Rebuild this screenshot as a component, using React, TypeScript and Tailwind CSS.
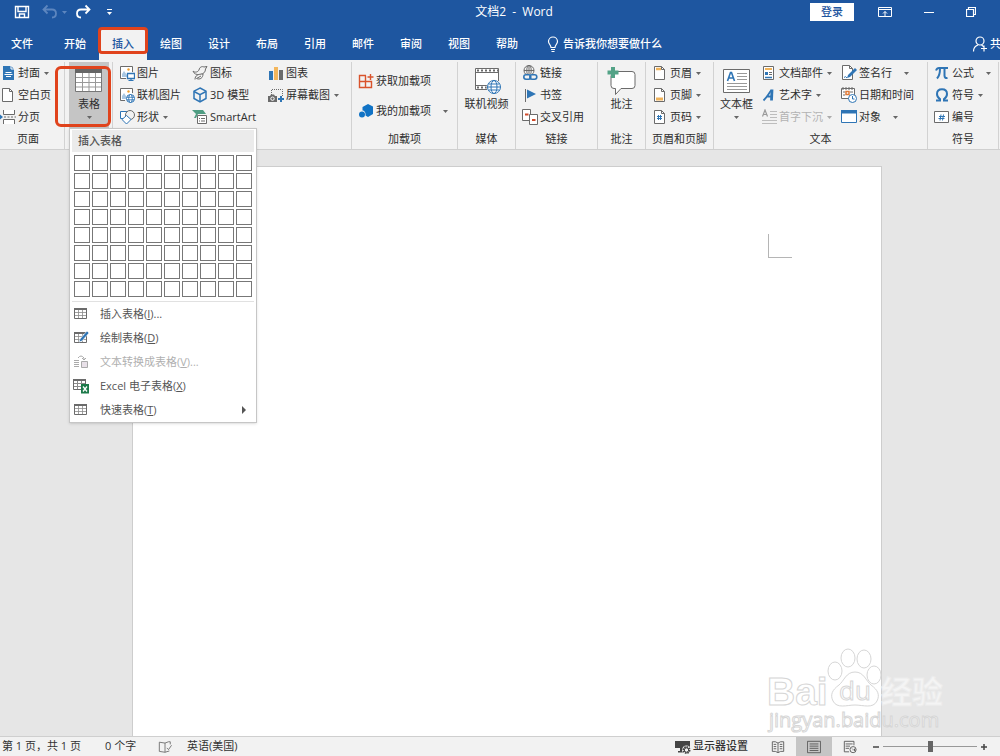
import type { ReactNode } from "react";

const BLUE = "#2f75b5";
const GRAY = "#6b6b6b";

interface IconProps {
  children: ReactNode;
  className?: string;
  box?: string;
}

function Icon({ children, className = "size-4", box = "0 0 16 16" }: IconProps) {
  return (
    <svg viewBox={box} className={`shrink-0 ${className}`} fill="none" aria-hidden="true">
      {children}
    </svg>
  );
}

function Caret({ className = "" }: { className?: string }) {
  return (
    <Icon box="0 0 5 3" className={`h-[3px] w-[5px] ${className}`}>
      <path d="M0 0h5L2.5 3z" fill="#666" />
    </Icon>
  );
}

/* ---------- Ribbon icons ---------- */

const CoverIcon = (
  <Icon>
    <path d="M3 1h8l3 3v11H3z" fill={BLUE} />
    <path d="M11 1v3h3" stroke="#fff" />
    <path d="M5.500 7.500h6M4.500 9.500h8M6 11.500h5" stroke="#fff" />
  </Icon>
);

const BlankPageIcon = (
  <Icon>
    <path d="M2.500 1.500h7l3 3v10h-10z" fill="#fff" stroke={GRAY} />
    <path d="M9.500 1.500v3h3" stroke={GRAY} />
  </Icon>
);

const BreakIcon = (
  <Icon>
    <path d="M3.500 1v4.500h11V1M3.500 15v-4.500h11V15" fill="#fff" stroke={GRAY} />
    <path d="M4 8h2M7.500 8h2M11 8h2M14.500 8H16" stroke={GRAY} />
    <path d="M0 5.500 3 8 0 10.500z" fill={BLUE} />
  </Icon>
);

const PictureIcon = (
  <Icon>
    <path d="M7 13.500H1.500v-12h12V7" fill="#fff" stroke={GRAY} />
    <path d="M3 12V9l2-3 3 4v2z" fill="#a9c7e2" />
    <circle cx="9.500" cy="4.500" r="1.200" fill="#f0a030" />
    <path d="M8.500 8.500h7v5h-7z" fill="#fff" stroke={BLUE} strokeWidth="1.300" />
    <path d="M12 13.500V15M9.500 15.500h5" stroke={BLUE} strokeWidth="1.200" />
  </Icon>
);

const OnlinePictureIcon = (
  <Icon>
    <path d="M6 13.500H1.500v-12h12V6" fill="#fff" stroke={GRAY} />
    <path d="M3 12V9l2-3 2 3v3z" fill="#a9c7e2" />
    <circle cx="9.500" cy="4.500" r="1.200" fill="#f0a030" />
    <circle cx="11.500" cy="11.500" r="4" fill="#fff" stroke={BLUE} />
    <ellipse cx="11.500" cy="11.500" rx="1.800" ry="4" stroke={BLUE} />
    <path d="M7.500 10.300h8M7.500 12.800h8" stroke={BLUE} strokeWidth=".8" />
  </Icon>
);

const ShapesIcon = (
  <Icon>
    <path d="M1.500 2.500h8v7h-8z" fill="#fff" stroke={BLUE} />
    <circle cx="11" cy="6" r="4.500" fill="#f2f2f2" stroke={GRAY} />
    <path d="m7.500 6.500 4.500 4-4.500 4.500L3 10.500z" fill="#fff" stroke={BLUE} />
  </Icon>
);

const IconsIcon = (
  <Icon>
    <path
      d="M1 6c2 2 5 1 6-1 .5-3 3-4 5-3l3-.5-1.500 2.500c0 3-2 5-5 5.500C4.500 10 2 9 1 6z"
      stroke={GRAY}
    />
    <path d="M3 14.500c0-4 3-5.500 8-5.500 0 4-3 6-6.500 4.500L9 11" fill="#f2f2f2" stroke={GRAY} />
  </Icon>
);

const CubeIcon = (
  <Icon>
    <path d="m8 1 6 3.200v7.300L8 15l-6-3.500V4.200z" stroke={BLUE} strokeWidth="1.500" />
    <path d="m2 4.500 6 3.200 6-3.200M8 7.700V15" stroke={BLUE} strokeWidth="1.500" />
  </Icon>
);

const SmartArtIcon = (
  <Icon>
    <path d="M0 1h11l3 4h-8l-2 4H2l2-4z" fill="#4f9d83" />
    <path d="M5.500 6.500h9v8h-9z" fill="#fff" stroke={GRAY} />
    <path d="M7 9.500h1M9 9.500h4M7 12h1M9 12h4" stroke={GRAY} />
  </Icon>
);

const ChartIcon = (
  <Icon>
    <path d="M1 6h4v9H1z" fill={BLUE} />
    <path d="M6 2h4v13H6z" fill="#f3b65c" />
    <path d="M11 5h4v10h-4z" fill={GRAY} />
  </Icon>
);

const ScreenshotIcon = (
  <Icon>
    <path d="M3.500 8V2.500h11V9" stroke={GRAY} strokeDasharray="1 1" />
    <path d="M0 9h2l1-1.500h3L7 9h2v6H0z" fill={GRAY} />
    <circle cx="4.500" cy="11.700" r="1.700" fill={GRAY} stroke="#fff" />
    <path d="M13 9v6M10 12h6" stroke={BLUE} strokeWidth="2" />
  </Icon>
);

const GetAddinIcon = (
  <Icon>
    <path d="M8 2.500H1.500v12h12V8.500h-12M7.500 2.500v12" stroke="#d9532c" strokeWidth="1.400" />
    <path d="M12.500 1v6M9.500 4h6" stroke="#d9532c" strokeWidth="1.400" />
  </Icon>
);

const MyAddinIcon = (
  <Icon>
    <path d="m10 1 5 2.500V11l-5 3-2.500-1.500C8 9 6 7.500 4.500 7.500V4z" fill="#1173c5" />
    <circle cx="4" cy="11.500" r="3" fill="#1173c5" />
  </Icon>
);

const VideoIcon = (
  <Icon box="0 0 28 28" className="size-7">
    <path d="M2.500 1.500h23v21h-23z" fill="#fff" />
    <path d="M25.500 14V1.500h-23v21H14M2.500 5.500h23M2.500 18.500H14" stroke={GRAY} />
    <path d="M4 3.500h21M4 20.500h10" stroke={GRAY} strokeWidth="2" strokeDasharray="2 2" />
    <circle cx="21" cy="20" r="7.500" fill="#f2f2f2" />
    <circle cx="21" cy="20" r="6.500" fill="#fff" stroke={BLUE} />
    <ellipse cx="21" cy="20" rx="3" ry="6.500" stroke={BLUE} />
    <path d="M14.500 20h13M15.500 17h11M15.500 23h11" stroke={BLUE} />
  </Icon>
);

const LinkIcon = (
  <Icon>
    <circle cx="7" cy="5.500" r="5" stroke={GRAY} />
    <ellipse cx="7" cy="5.500" rx="2.200" ry="5" stroke={GRAY} />
    <path d="M2 5.500h10M7 .5V9" stroke={GRAY} />
    <path d="M1 9h15v7H1z" fill="#f2f2f2" />
    <rect x="1.800" y="9.800" width="7" height="4.500" rx="2.200" stroke={BLUE} strokeWidth="1.600" />
    <rect x="7.800" y="9.800" width="7" height="4.500" rx="2.200" stroke={BLUE} strokeWidth="1.600" />
  </Icon>
);

const BookmarkIcon = (
  <Icon>
    <path d="M3.500 2v13" stroke={GRAY} />
    <path d="M5 2.500 14 7l-9 4.500z" fill={BLUE} />
  </Icon>
);

const CrossRefIcon = (
  <Icon>
    <path d="M.5.5h8v11h-8z" fill="#fff" stroke={GRAY} />
    <path d="M7.500 5.500h8v10h-8z" fill="#fff" stroke={GRAY} />
    <path d="M3 5.500h3.500M10 11h3.500" stroke="#d04a2b" strokeWidth="2" />
  </Icon>
);

const CommentIcon = (
  <Icon box="0 0 32 30" className="h-[30px] w-8">
    <path
      d="M7 5.500h19q3 0 3 3v11q0 3-3 3H15l-5.500 6v-6H8q-3 0-3-3v-10"
      fill="#fff"
      stroke={GRAY}
    />
    <path d="M7 1v11M1.500 6.500h11" stroke="#54a387" strokeWidth="4" />
  </Icon>
);

const PageFrame = (
  <>
    <path d="M2.500 1.500h7l3 3v10h-10z" fill="#fff" stroke={GRAY} />
    <path d="M9.500 1.500v3h3" stroke={GRAY} />
  </>
);

const HeaderIcon = (
  <Icon>
    {PageFrame}
    <path d="M4 4h5" stroke="#f0b35a" strokeWidth="2.500" />
  </Icon>
);

const FooterIcon = (
  <Icon>
    {PageFrame}
    <path d="M4 12h7" stroke="#f0b35a" strokeWidth="3" />
  </Icon>
);

const PageNumberIcon = (
  <Icon>
    {PageFrame}
    <path d="M6.500 6v5M8.500 6v5M5 7.500h5M5 9.500h5" stroke={BLUE} />
  </Icon>
);

const TextBoxIcon = (
  <Icon box="0 0 28 26" className="h-[26px] w-7">
    <path d="M.5 1.500h26v23H.5z" fill="#fff" stroke={GRAY} />
    <path d="m4.500 13 3-8.500h1l3 8.500M5.500 10h5" stroke={BLUE} strokeWidth="1.600" />
    <path d="M14 5.500h10M14 8.500h10M14 11.500h10M4 15.500h20M4 18.500h20M4 21.500h20" stroke="#999" />
  </Icon>
);

const QuickPartsIcon = (
  <Icon>
    <path d="M2.500 1.500h10v13h-10z" fill="#fff" stroke={GRAY} />
    <path d="M4 4h7" stroke="#f0b35a" strokeWidth="2" />
    <path d="M4 7h3v3H4z" fill={BLUE} />
    <path d="M8 7.500h3M8 9.500h3" stroke={GRAY} />
    <path d="M4 12.500h7" stroke={BLUE} strokeWidth="1.500" />
  </Icon>
);

const WordArtIcon = (
  <Icon>
    <path d="M2.500 13.500C6 10 8 6 10.500 3M5.500 9.500h5" stroke={BLUE} strokeWidth="1.800" />
    <path d="m11 2.500-.5 11" stroke={BLUE} strokeWidth="2.800" />
  </Icon>
);

const DropCapIcon = (
  <Icon>
    <path d="M1.500 7.500 4 1l2.500 6.500M2.500 5.500h3" stroke="#9a9a9a" strokeWidth="1.200" />
    <path d="M9 2.500h7M9 5.500h7M9 8.500h7M1 11.500h15M1 14.500h15" stroke="#bdbdbd" />
  </Icon>
);

const SignatureIcon = (
  <Icon>
    <path d="M1.500.5h7l3 3v11h-10z" fill="#fff" stroke={GRAY} />
    <path d="M8.500.5v3h3" stroke={GRAY} />
    <path d="m6 13 1-3 7-7 2 2-7 7z" fill={BLUE} />
    <path d="M3 12.500q1.500-2 3 .5" stroke={BLUE} />
  </Icon>
);

const DateIcon = (
  <Icon>
    <path d="M.5 1.500h13v10H.5z" fill="#fff" stroke={GRAY} />
    <path d="M1 1.500h12" stroke={GRAY} strokeWidth="2" strokeDasharray="2 1" />
    <path d="M2 5h2M2 8h2M9 5h3" stroke={GRAY} />
    <path d="M5 4.500h3v3H5z" stroke="#e07b39" strokeWidth="1.500" />
    <circle cx="11.500" cy="11.500" r="4" fill="#fff" stroke={BLUE} />
    <path d="M11.500 9v3h2" stroke={BLUE} />
  </Icon>
);

const ObjectIcon = (
  <Icon>
    <path d="M.5 1.500h15v12H.5z" fill="#fff" stroke={BLUE} />
    <path d="M0 1h16v3.500H0z" fill={BLUE} />
  </Icon>
);

const PiIcon = (
  <Icon>
    <path d="M2 5.500Q3 3 5 3h9" stroke={BLUE} strokeWidth="2" />
    <path d="M6 3.500q0 7-3 10M10.500 3.500v7q0 3 3 2.500" stroke={BLUE} strokeWidth="2" />
  </Icon>
);

const OmegaIcon = (
  <Icon>
    <path
      d="M2 13.500h4V12C3.500 10.500 3 8.500 3 7c0-3 2-4.700 5-4.700S13 4 13 7c0 1.500-.5 3.500-3 5v1.500h4"
      stroke={BLUE}
      strokeWidth="2"
    />
  </Icon>
);

const NumberIcon = (
  <Icon>
    <path d="M.5 2.500h14v11H.5z" fill="#fff" stroke={GRAY} />
    <path d="m7 5.500-1 6M9.500 5.500l-1 6M5 7.500h6M4.500 9.500h6" stroke={BLUE} />
  </Icon>
);

/* ---------- Ribbon building blocks ---------- */

interface RibbonItemProps {
  icon: ReactNode;
  label: string;
  caret?: boolean;
  caretClass?: string;
  disabled?: boolean;
}

function RibbonItem({ icon, label, caret, caretClass = "ml-1", disabled }: RibbonItemProps) {
  return (
    <button
      type="button"
      disabled={disabled}
      className="flex h-[22px] items-center whitespace-nowrap disabled:text-[#b3b3b3]"
    >
      {icon}
      <span className="ml-0.5">{label}</span>
      {caret && <Caret className={disabled ? `opacity-50 ${caretClass}` : caretClass} />}
    </button>
  );
}

interface BigButtonProps {
  icon: ReactNode;
  label: string;
  caret?: boolean;
}

function BigButton({ icon, label, caret }: BigButtonProps) {
  return (
    <button type="button" className="flex flex-col items-center whitespace-nowrap pt-1">
      <span className="flex h-[30px] items-center">{icon}</span>
      <span className="leading-4">{label}</span>
      {caret && <Caret className="mt-1" />}
    </button>
  );
}

interface GroupProps {
  title: string;
  className: string;
  inset?: string;
  children: ReactNode;
}

function Group({ title, className, inset = "", children }: GroupProps) {
  return (
    <section
      aria-label={title}
      className={`flex shrink-0 flex-col border-r border-[#d2d2d2] ${className}`}
    >
      <div className={`flex h-[66px] ${inset}`}>{children}</div>
      <div className="text-center leading-[21px]">{title}</div>
    </section>
  );
}

/* ---------- Table menu ---------- */

const GridGlyph = (
  <>
    <path d="M1.500 2.500h12v10h-12z" fill="#fff" stroke={GRAY} />
    <path d="M1 3h13" stroke={GRAY} strokeWidth="2" />
    <path d="M5.500 4v8M9.500 4v8M2 6.500h11M2 9.500h11" stroke="#8c8c8c" strokeWidth=".8" />
  </>
);

const menuItems = [
  { label: "插入表格", hotkey: "I", suffix: "...", icon: <Icon>{GridGlyph}</Icon> },
  {
    label: "绘制表格",
    hotkey: "D",
    suffix: "",
    icon: (
      <Icon>
        {GridGlyph}
        <path d="m6 12 1-3 7-8 2 2-7 8z" fill={BLUE} stroke="#fff" strokeWidth=".6" />
      </Icon>
    ),
  },
  {
    label: "文本转换成表格",
    hotkey: "V",
    suffix: "...",
    disabled: true,
    icon: (
      <Icon>
        <path d="M1 6.500h5M1 8.500h5M1 10.500h5M1 12.500h5" stroke="#aaa" />
        <path d="M8.500 7.500h6v6h-6z" fill="#e8e0e8" stroke="#aaa" />
        <path d="M5 4q3-4 6 0v2M9 4l2 2 2-2" stroke="#aaa" />
      </Icon>
    ),
  },
  {
    label: "Excel 电子表格",
    hotkey: "X",
    suffix: "",
    icon: (
      <Icon>
        <path d="M.5 1.500h12v10H.5z" fill="#fff" stroke={GRAY} />
        <path d="M0 2h13" stroke={GRAY} strokeWidth="2" />
        <path d="M4.500 3v8M8.500 3v8M1 5.500h11M1 8.500h11" stroke="#8c8c8c" />
        <path d="M8 6h8v9.500H8z" fill="#1d7a4a" />
        <path d="m10 8.500 4 5M14 8.500l-4 5" stroke="#fff" strokeWidth="1.300" />
      </Icon>
    ),
  },
  { label: "快速表格", hotkey: "T", suffix: "", submenu: true, icon: <Icon>{GridGlyph}</Icon> },
];

function TableMenu() {
  return (
    <div className="absolute left-0 top-full z-10 w-[188px] border border-[#c6c6c6] bg-white px-0.5 pt-px text-[#555] shadow-sm">
      <div className="bg-[#ebebeb] pl-1.5 font-medium leading-[22px]">插入表格</div>
      <div className="grid grid-cols-10 gap-0.5 px-0.5 pb-1 pt-[3px]">
        {Array.from({ length: 80 }, (_, i) => (
          <button
            key={i}
            type="button"
            aria-label={`${(i % 10) + 1}x${Math.floor(i / 10) + 1}`}
            className="h-4 border border-[#777]"
          />
        ))}
      </div>
      <div className="border-t border-[#e1e1e1]">
        {menuItems.map((item) => (
          <button
            key={item.hotkey}
            type="button"
            disabled={item.disabled}
            className="flex h-6 w-full items-center pl-px pr-2 disabled:text-[#b0b0b0]"
          >
            {item.icon}
            <span className="ml-[11px]">
              {item.label}(<u>{item.hotkey}</u>){item.suffix}
            </span>
            {item.submenu && (
              <Icon box="0 0 4 8" className="ml-auto h-2 w-1">
                <path d="M0 0v8l4-4z" fill="#555" />
              </Icon>
            )}
          </button>
        ))}
      </div>
    </div>
  );
}

/* ---------- Page parts ---------- */

function TitleBar() {
  return (
    <div className="relative mb-1 flex h-6 items-center pl-3.5">
      <div className="flex items-center">
        <button type="button" aria-label="保存">
          <Icon>
            <path d="M1.500 2.500h13v11h-13z" stroke="#fff" strokeWidth="1.400" />
            <path d="M4 3v4.500h8V3M5.500 13V10h5v3" stroke="#fff" strokeWidth="1.400" />
          </Icon>
        </button>
        <button type="button" aria-label="撤消" className="ml-3 flex items-center">
          <Icon>
            <path d="M5.500 1.500 1.500 5.500l4 4M2 5.500h8q4 0 4 4t-4 4" stroke="#5d86bf" strokeWidth="1.800" />
          </Icon>
          <Icon box="0 0 5 3" className="ml-1 h-[3px] w-[5px]">
            <path d="M0 0h5L2.500 3z" fill="#5d86bf" />
          </Icon>
        </button>
        <button type="button" aria-label="重复" className="ml-2">
          <Icon>
            <path d="m10.500 1.500 4 4-4 4M14 5.500H6q-4 0-4 4t4 4" stroke="#fff" strokeWidth="1.800" />
          </Icon>
        </button>
        <button type="button" aria-label="自定义快速访问工具栏" className="ml-4">
          <Icon box="0 0 5 6" className="h-1.5 w-[5px]">
            <path d="M0 .5h5" stroke="#fff" />
            <path d="M0 3h5L2.500 6z" fill="#fff" />
          </Icon>
        </button>
      </div>
      <h1 className="absolute left-1/2 ml-3.5 -translate-x-1/2 whitespace-nowrap text-xs text-white">
        文档2&nbsp; -&nbsp; Word
      </h1>
      <div className="ml-auto flex items-center text-white">
        <button type="button" className="h-[18px] w-11 bg-white font-medium text-[#1e56a0]">
          登录
        </button>
        <button type="button" aria-label="功能区显示选项" className="ml-6">
          <Icon className="h-3 w-3.5" box="0 0 14 12">
            <path d="M.5 1.500h13v9H.5zM.5 3.500h13M7 10V5.500M5 7.500l2-2 2 2" stroke="#fff" />
          </Icon>
        </button>
        <button type="button" aria-label="最小化" className="ml-8">
          <Icon box="0 0 10 10" className="size-2.5">
            <path d="M0 5.500h10" stroke="#fff" />
          </Icon>
        </button>
        <button type="button" aria-label="还原" className="ml-8 mr-6">
          <Icon box="0 0 10 10" className="size-2.5">
            <path d="M.5 2.500h7v7h-7zM2.500 2V.5h7v7H8" stroke="#fff" strokeWidth="1.200" />
          </Icon>
        </button>
      </div>
    </div>
  );
}

const tabs = ["开始", "插入", "绘图", "设计", "布局", "引用", "邮件", "审阅", "视图", "帮助"];

function TabBar() {
  return (
    <nav className="flex h-8 items-stretch font-medium text-white">
      <a href="#file" className="mr-[7px] flex w-11 items-center justify-center">
        文件
      </a>
      {tabs.map((tab) =>
        tab === "插入" ? (
          <a
            key={tab}
            href="#insert"
            className="relative flex w-12 items-center justify-center bg-[#f2f2f2] text-[#1e56a0]"
          >
            {tab}
            <span className="absolute -inset-x-px -top-px bottom-1.5 rounded-sm border-3 border-[#e0431c]" />
          </a>
        ) : (
          <a key={tab} href={`#${tab}`} className="flex w-12 items-center justify-center">
            {tab}
          </a>
        )
      )}
      <button type="button" className="ml-4 flex items-center gap-1">
        <Icon box="0 0 12 16" className="h-4 w-3">
          <path
            d="M4 11.500C4 9 1.500 8 1.500 5.500a4.500 4.500 0 0 1 9 0C10.500 8 8 9 8 11.500zM4 13.500h4M4.500 15.500h3"
            stroke="#fff"
            strokeWidth="1.200"
          />
        </Icon>
        告诉我你想要做什么
      </button>
      <button
        type="button"
        className="ml-auto flex w-7 items-center gap-0.5 overflow-hidden whitespace-nowrap"
      >
        <Icon>
          <circle cx="8" cy="5" r="4" stroke="#fff" strokeWidth="1.200" />
          <path d="M1.500 15.500q0-5 4.500-6.500M9.500 9l2 1.500M12 9.500v6M9 12.500h6" stroke="#fff" strokeWidth="1.200" />
        </Icon>
        共享
      </button>
    </nav>
  );
}

function Ribbon() {
  return (
    <div className="flex border-b border-[#cfcfcf] bg-[#f2f2f2] pt-0.5 text-[#2e2e2e]">
      <Group title="页面" className="w-[65px] pr-2">
        <div>
          <RibbonItem icon={CoverIcon} label="封面" caret />
          <RibbonItem icon={BlankPageIcon} label="空白页" />
          <RibbonItem icon={BreakIcon} label="分页" />
        </div>
      </Group>

      <div className="w-12 shrink-0 border-r border-[#d2d2d2] pl-1">
        <div className="relative h-[66px] w-10">
          <button
            type="button"
            aria-expanded="true"
            className="flex size-full flex-col items-center bg-[#c5c5c5] pt-1.5"
          >
            <Icon box="0 0 28 26" className="h-[26px] w-7">
              <path d="M.5 1.500h26v22H.5z" fill="#fff" stroke="#777" />
              <path d="M0 1h27v4H0z" fill="#666" />
              <path d="M7.500 5v18M14 5v18M20.500 5v18M1 9.500h25M1 14.500h25M1 19h25" stroke="#999" />
            </Icon>
            <span className="mt-0.5 leading-4">表格</span>
            <Caret className="mt-1" />
          </button>
          <span className="pointer-events-none absolute -left-3.5 -right-0.5 bottom-px top-1 rounded-md border-3 border-[#e0431c]" />
          <TableMenu />
        </div>
      </div>

      <Group title="插图" className="w-[239px]" inset="pl-1.5">
        <div className="w-[73px]">
          <RibbonItem icon={PictureIcon} label="图片" />
          <RibbonItem icon={OnlinePictureIcon} label="联机图片" />
          <RibbonItem icon={ShapesIcon} label="形状" caret />
        </div>
        <div className="w-[76px]">
          <RibbonItem icon={IconsIcon} label="图标" />
          <RibbonItem icon={CubeIcon} label="3D 模型" />
          <RibbonItem icon={SmartArtIcon} label="SmartArt" />
        </div>
        <div>
          <RibbonItem icon={ChartIcon} label="图表" />
          <RibbonItem icon={ScreenshotIcon} label="屏幕截图" caret />
        </div>
      </Group>

      <Group title="加载项" className="w-[106px]" inset="pl-1.5">
        <div className="flex flex-col gap-2 pt-2">
          <RibbonItem icon={GetAddinIcon} label="获取加载项" />
          <RibbonItem icon={MyAddinIcon} label="我的加载项" caret caretClass="ml-3" />
        </div>
      </Group>

      <Group title="媒体" className="w-[58px]">
        <div className="flex flex-1 justify-center">
          <BigButton icon={VideoIcon} label="联机视频" />
        </div>
      </Group>

      <Group title="链接" className="w-[82px]" inset="pl-1.5">
        <div>
          <RibbonItem icon={LinkIcon} label="链接" />
          <RibbonItem icon={BookmarkIcon} label="书签" />
          <RibbonItem icon={CrossRefIcon} label="交叉引用" />
        </div>
      </Group>

      <Group title="批注" className="w-12">
        <div className="flex flex-1 justify-center">
          <BigButton icon={CommentIcon} label="批注" />
        </div>
      </Group>

      <Group title="页眉和页脚" className="w-[68px]" inset="pl-1.5">
        <div>
          <RibbonItem icon={HeaderIcon} label="页眉" caret />
          <RibbonItem icon={FooterIcon} label="页脚" caret />
          <RibbonItem icon={PageNumberIcon} label="页码" caret />
        </div>
      </Group>

      <Group title="文本" className="w-[214px]" inset="pl-1.5">
        <div className="w-[41px]">
          <BigButton icon={TextBoxIcon} label="文本框" caret />
        </div>
        <div className="w-20">
          <RibbonItem icon={QuickPartsIcon} label="文档部件" caret />
          <RibbonItem icon={WordArtIcon} label="艺术字" caret />
          <RibbonItem icon={DropCapIcon} label="首字下沉" caret disabled />
        </div>
        <div>
          <RibbonItem icon={SignatureIcon} label="签名行" caret caretClass="ml-3" />
          <RibbonItem icon={DateIcon} label="日期和时间" />
          <RibbonItem icon={ObjectIcon} label="对象" caret caretClass="ml-3" />
        </div>
      </Group>

      <Group title="符号" className="w-[71px]" inset="pl-1.5">
        <div>
          <RibbonItem icon={PiIcon} label="公式" caret caretClass="ml-3" />
          <RibbonItem icon={OmegaIcon} label="符号" caret />
          <RibbonItem icon={NumberIcon} label="编号" />
        </div>
      </Group>
    </div>
  );
}

function Watermark() {
  return (
    <svg
      viewBox="0 0 190 90"
      className="pointer-events-none absolute bottom-0 right-[50px] h-[90px] w-[190px]"
      fill="#fff"
      fillOpacity=".6"
      stroke="#d6d6d6"
      fontFamily="'Open Sans', 'Noto Sans CJK SC', sans-serif"
      fontWeight="700"
    >
      <text x="7" y="59" fontSize="39" fontFamily="'Liberation Sans', sans-serif">
        Bai
      </text>
      <ellipse cx="75" cy="25" rx="7" ry="9" />
      <ellipse cx="88" cy="12" rx="7" ry="9" />
      <ellipse cx="104" cy="13" rx="7" ry="9" />
      <ellipse cx="114" cy="29" rx="7" ry="9" />
      <path d="M95 26c-9 0-11 9-16 13-7 5-9 10-6 16 4 8 14 4 22 4s18 4 22-4c3-6 1-11-6-16-5-4-7-13-16-13z" />
      <text x="79" y="54" fontSize="26" fontWeight="400">
        du
      </text>
      <text x="121" y="57" fontSize="31" stroke="#ececec">
        经验
      </text>
      <text x="9" y="81" fontSize="20" fontWeight="400">
        jingyan.baidu.com
      </text>
    </svg>
  );
}

function StatusBar() {
  return (
    <footer className="flex h-5 items-center border-t border-[#cfcfcf] bg-[#f2f2f2] pl-0.5 text-[#333]">
      <span className="w-[103px]">第 1 页，共 1 页</span>
      <span className="w-[52px]">0 个字</span>
      <Icon className="h-3.5 w-4">
        <path d="M8 3.500v10.500L1.500 13V2.500zl4-1.500h2v3M8 14l5-1.500M10 9l2 2 3.500-5" stroke={GRAY} />
      </Icon>
      <span className="ml-3.5">英语(美国)</span>
      <button type="button" className="ml-auto flex items-center gap-0.5 font-medium">
        <Icon>
          <path d="M0 2h15v7H0zM5 9h3v3H5zM3 12h5v1.500H3z" fill="#444" />
          <circle cx="11.500" cy="11" r="4.500" fill="#f2f2f2" />
          <circle cx="11.500" cy="11" r="3" stroke="#444" strokeWidth="2" strokeDasharray="1.500 .8" />
          <circle cx="11.500" cy="11" r="2.200" stroke="#444" />
        </Icon>
        显示器设置
      </button>
      <div className="ml-3 flex h-full">
        <button type="button" aria-label="阅读视图" className="flex w-9 items-center justify-center">
          <Icon className="size-3.5">
            <path d="M8 3.500 5 2H1.500v11H5l3 1.500 3-1.500h3.500V2H11zV14" stroke="#555" />
            <path d="M3 5h3M3 7.500h3M3 10h3M10 5h3M10 7.500h3M10 10h3" stroke="#555" />
          </Icon>
        </button>
        <button
          type="button"
          aria-label="页面视图"
          className="flex w-9 items-center justify-center bg-[#c5c5c5]"
        >
          <Icon className="size-3.5">
            <path d="M.5 1.500h15v13H.5zM3 4.500h10M3 7h10M3 9.500h10M3 12h10" stroke="#555" />
          </Icon>
        </button>
        <button type="button" aria-label="Web 版式视图" className="flex w-9 items-center justify-center">
          <Icon className="size-3.5">
            <path d="M7 13.500H1.500v-12h11V6M3 4.500h8M3 7h5M3 9.500h4" stroke="#555" />
            <circle cx="11.500" cy="11" r="3.500" stroke="#555" />
            <path d="m9 9 2 1v2l3-3v4" fill="#555" />
          </Icon>
        </button>
      </div>
      <div className="ml-1 mr-3 flex items-center gap-[3px]">
        <button type="button" aria-label="缩小">
          <Icon box="0 0 8 8" className="size-2">
            <path d="M1 4h6" stroke="#444" strokeWidth="1.500" />
          </Icon>
        </button>
        <input
          type="range"
          aria-label="缩放"
          defaultValue={50}
          className="h-3 w-[94px] appearance-none bg-transparent [&::-webkit-slider-runnable-track]:h-px [&::-webkit-slider-runnable-track]:bg-[#999] [&::-webkit-slider-thumb]:-mt-[5px] [&::-webkit-slider-thumb]:h-[11px] [&::-webkit-slider-thumb]:w-[5px] [&::-webkit-slider-thumb]:appearance-none [&::-webkit-slider-thumb]:bg-[#666]"
        />
        <button type="button" aria-label="放大">
          <Icon box="0 0 8 8" className="size-2">
            <path d="M1 4h6M4 1v6" stroke="#444" strokeWidth="1.500" />
          </Icon>
        </button>
      </div>
    </footer>
  );
}

export default function App() {
  return (
    <div className="flex min-h-screen flex-col overflow-hidden bg-[#e6e6e6] font-['Open_Sans','Noto_Sans_CJK_SC',sans-serif] text-[11px]">
      <header className="bg-[#1e56a0]">
        <TitleBar />
        <TabBar />
      </header>
      <Ribbon />
      <main className="relative flex flex-1 justify-center pl-3.5 pt-4">
        <div className="flex w-[76%] justify-end border border-b-0 border-[#cdcdcd] bg-white pr-[89px] pt-[67px]">
          <div className="size-6 border-b border-l border-[#b5b5b5]" />
        </div>
        <Watermark />
      </main>
      <StatusBar />
    </div>
  );
}
